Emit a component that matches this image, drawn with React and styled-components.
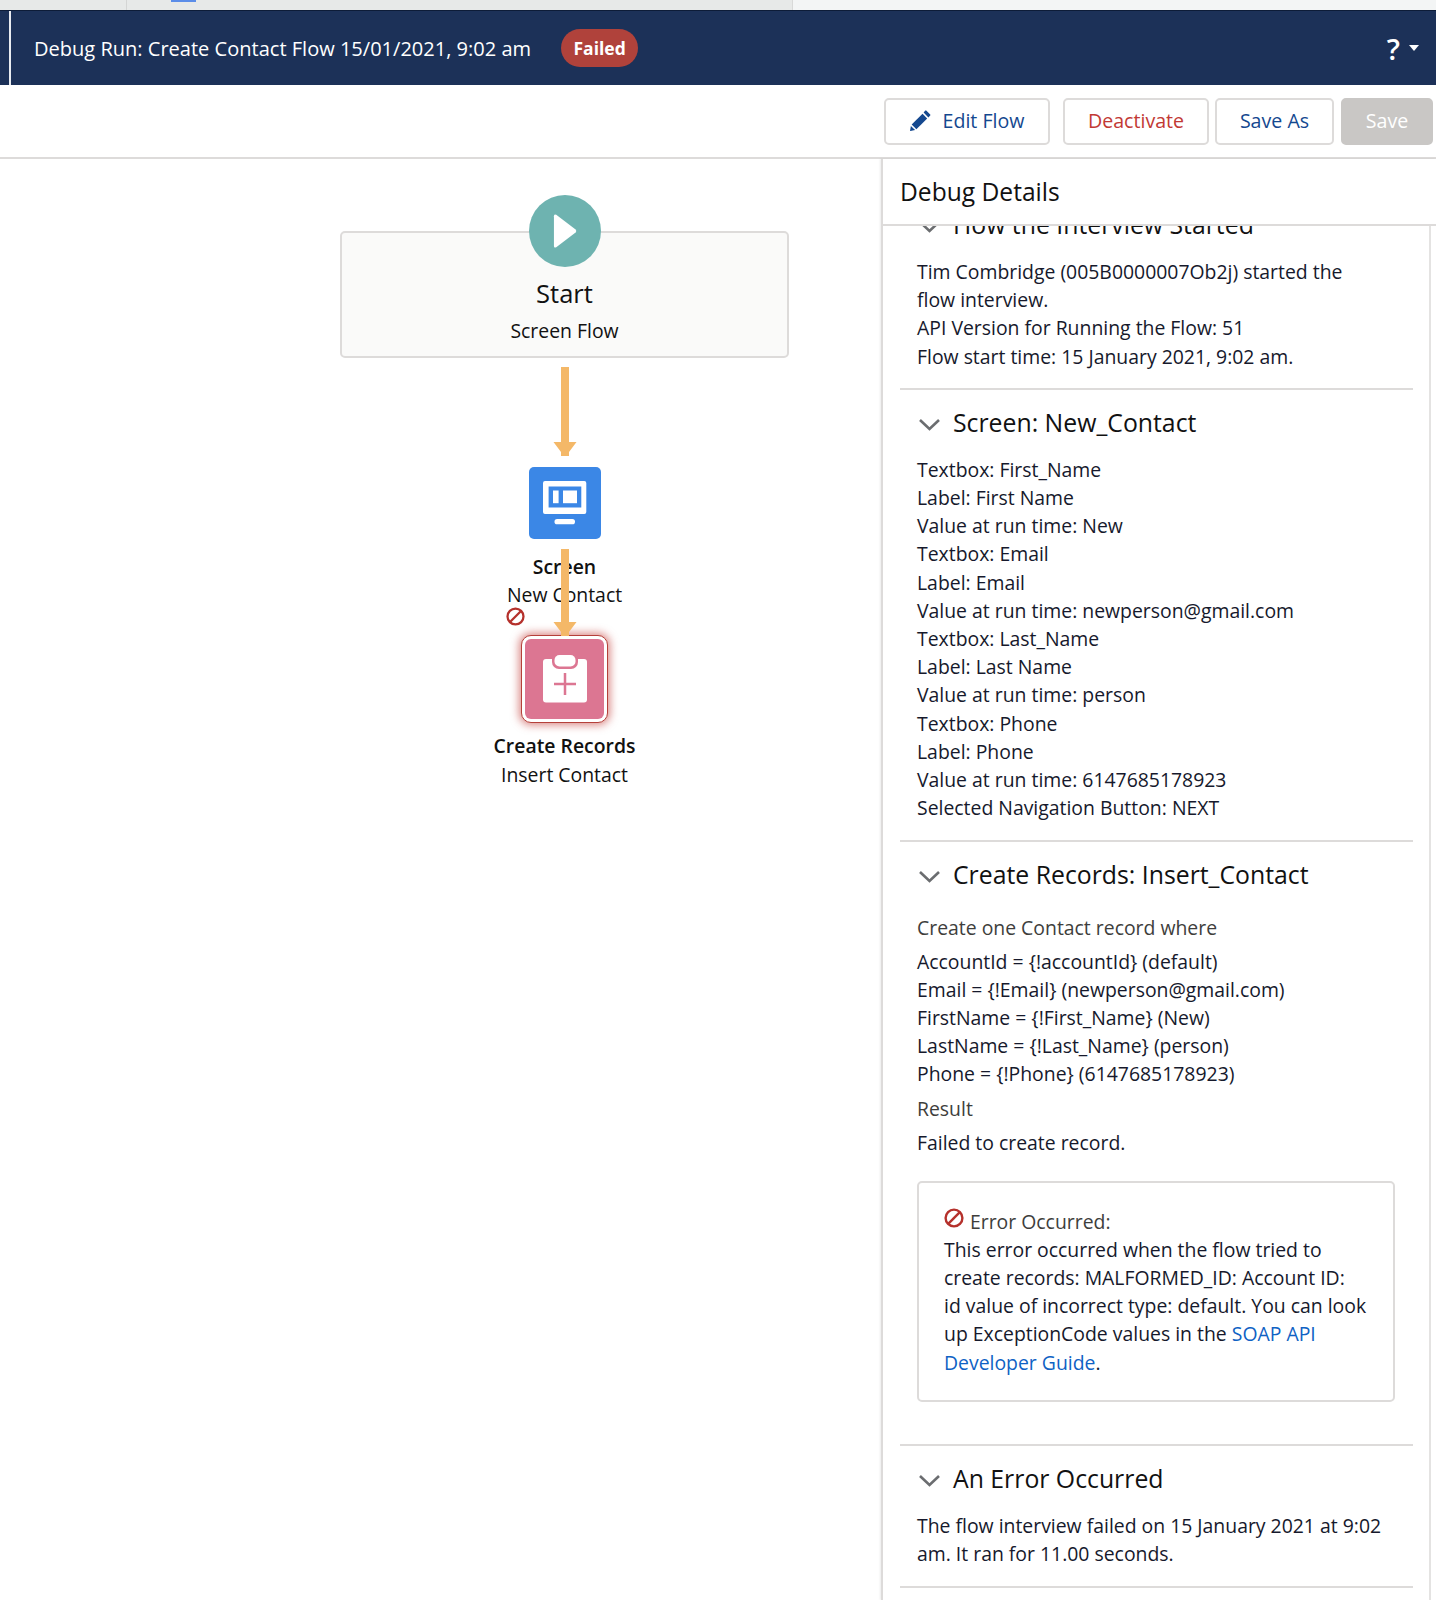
import React from "react";
import styled, { createGlobalStyle } from "styled-components";

const GlobalStyle = createGlobalStyle`
  html, body { margin: 0; padding: 0; background: #fff; }
  body { font-family: "Open Sans", "Noto Sans", sans-serif; color: #16192c; }
  * { box-sizing: border-box; }
`;

const Page = styled.div`
  width: 1436px;
  height: 1600px;
  overflow: hidden;
  display: flex;
  flex-direction: column;
`;

const TabStrip = styled.div`
  height: 11px;
  flex: none;
  display: flex;
  background: #f3f5f5;
  border-bottom: 1px solid #0d1c38;
`;

const TabGroove = styled.div`
  width: 793px;
  position: relative;
  background: #e7e9e8;
  border-right: 1px solid #d8d9d8;
  padding-left: 126px;
`;

const TabDivider = styled.div`
  width: 46px;
  height: 10px;
  border-left: 1px solid #d4d5d4;
  padding-left: 44px;

  &::after {
    content: "";
    display: block;
    width: 25px;
    height: 2px;
    background: #5b8de8;
  }
`;

const Header = styled.header`
  height: 74px;
  flex: none;
  display: flex;
  align-items: center;
  justify-content: space-between;
  padding: 0 17px 0 9px;
  background: #1c3158;
  color: #fff;
`;

const HeaderLeft = styled.div`
  display: flex;
  align-items: center;
  height: 100%;
`;

const Stripe = styled.div`
  width: 2px;
  height: 100%;
  background: #e8ebf0;
  margin-right: 23px;
`;

const RunTitle = styled.h1`
  margin: 0;
  font-size: 20.05px;
  font-weight: 400;
  white-space: nowrap;
`;

const FailedBadge = styled.span`
  margin-left: 30px;
  width: 77px;
  height: 38px;
  display: flex;
  align-items: center;
  justify-content: center;
  border-radius: 19px;
  background: #b0423b;
  font-size: 17.5px;
  font-weight: 700;
`;

const HelpMenu = styled.div`
  display: flex;
  align-items: center;
  gap: 9px;
  font-size: 29px;
  font-weight: 600;
`;

const Caret = styled.span`
  width: 0;
  height: 0;
  border-left: 5px solid transparent;
  border-right: 5px solid transparent;
  border-top: 6px solid #fff;
`;

const Toolbar = styled.div`
  height: 74px;
  flex: none;
  display: flex;
  justify-content: flex-end;
  padding: 13px 3px 0 0;
  border-bottom: 2px solid #dddbda;
`;

const Button = styled.button`
  height: 47px;
  width: ${(p) => p.$width}px;
  margin-left: ${(p) => p.$gap}px;
  padding: 0 0 2px;
  display: flex;
  align-items: center;
  justify-content: center;
  gap: 12px;
  font: inherit;
  font-size: 19.6px;
  border-radius: 5px;
  border: 2px solid ${(p) => (p.$disabled ? "#c9c7c5" : "#dddbda")};
  background: ${(p) => (p.$disabled ? "#c9c7c5" : "#fff")};
  color: ${(p) => (p.$disabled ? "#fff" : p.$danger ? "#c23934" : "#14488f")};
`;

const Main = styled.div`
  flex: 1;
  min-height: 0;
  display: flex;
`;

const Canvas = styled.main`
  width: 881px;
  flex: none;
  padding: 36px 0 0 340px;
`;

const Diagram = styled.div`
  position: relative;
  width: 449px;
  display: flex;
  flex-direction: column;
  align-items: center;
  text-align: center;
`;

const StartCard = styled.div`
  width: 449px;
  height: 127px;
  margin-top: 36px;
  position: relative;
  display: flex;
  flex-direction: column;
  align-items: center;
  padding-top: 44px;
  border: 2px solid #dddbda;
  border-radius: 5px;
  background: #fafaf9;
`;

const StartCircle = styled.div`
  position: absolute;
  top: -38px;
  left: 186.5px;
  width: 72px;
  height: 72px;
  border-radius: 50%;
  background: #6eb3b0;
  display: flex;
  align-items: center;
  justify-content: center;
`;

const StartLabel = styled.div`
  font-size: 25.5px;
  line-height: 32px;
  color: #111;
`;

const StartType = styled.div`
  font-size: 19.4px;
  line-height: 28px;
  margin-top: 8px;
  color: #111;
`;

const Tile = styled.div`
  width: 72px;
  height: 72px;
  margin-top: 109px;
  border-radius: 5px;
  background: #3b87e6;
  display: flex;
  align-items: center;
  justify-content: center;
`;

const ErrorTile = styled.div`
  width: 87px;
  height: 88px;
  margin-top: 9px;
  border-radius: 10px;
  border: 1.5px solid #b5403a;
  box-shadow: 0 0 9px 2px rgba(194, 57, 52, 0.6);
  background: #fff;
  padding: 3px;
`;

const ErrorTileFill = styled.div`
  width: 100%;
  height: 100%;
  border-radius: 6px;
  background: #dc7692;
  display: flex;
  align-items: center;
  justify-content: center;
`;

const NodeName = styled.div`
  font-size: 19.4px;
  line-height: 28.2px;
  font-weight: 600;
  margin-top: ${(p) => p.$top}px;
  color: #111;
`;

const NodeLabel = styled.div`
  font-size: 19.4px;
  line-height: 28.2px;
  color: #111;
`;

const ErrorMark = styled.div`
  align-self: flex-start;
  margin-left: 166px;
  height: 19px;
  margin-top: -2px;
  display: flex;
`;

const Connector = styled.svg`
  position: absolute;
  left: 213px;
  top: ${(p) => p.$top}px;
`;

const Panel = styled.aside`
  flex: 1;
  min-width: 0;
  display: flex;
  flex-direction: column;
  border-left: 2px solid #dddbda;
  box-shadow: -1px 0 2px rgba(0, 0, 0, 0.08);
`;

const PanelHeader = styled.div`
  height: 67px;
  flex: none;
  padding: 0 0 0 17px;
  display: flex;
  align-items: center;
  border-bottom: 2px solid #dddbda;
  font-size: 24.6px;
  color: #111;
`;

const PanelScroll = styled.div`
  flex: 1;
  min-height: 0;
  overflow: hidden;
  padding: 0 16px 0 17px;
  border-right: 2px solid #e4e3e2;
  margin-right: 5px;
`;

const Section = styled.section`
  padding: ${(p) => (p.$clipped ? "0 0 17px" : "15px 0 18px")};
  margin-top: ${(p) => (p.$clipped ? "-19px" : "0")};
  border-bottom: 2px solid #dddbda;
`;

const SectionTitle = styled.h2`
  margin: 0;
  height: 34px;
  display: flex;
  align-items: center;
  gap: 13px;
  padding-left: 19px;
  font-size: 24.8px;
  line-height: 34px;
  font-weight: 400;
  color: #111;
`;

const SectionBody = styled.div`
  margin-top: ${(p) => p.$top || 17}px;
  padding-left: 17px;
  font-size: 19.4px;
  line-height: 28.2px;
  color: #16192c;
`;

const Line = styled.div`
  white-space: nowrap;
`;

const MutedLine = styled(Line)`
  color: #3e3e3c;
  margin: ${(p) => p.$top}px 0 ${(p) => p.$bottom}px;
`;

const ErrorBox = styled.div`
  width: 478px;
  height: 221px;
  margin: 24px 0 24px;
  padding: 24.5px 0 0 25px;
  border: 2px solid #dddbda;
  border-radius: 5px;
`;

const ErrorHeading = styled.div`
  display: flex;
  align-items: center;
  gap: 6px;
  color: #3e3e3c;

  svg {
    transform: translateY(-4px);
  }
`;

const DocLink = styled.a`
  color: #0f62c4;
  text-decoration: none;
`;

function PencilIcon() {
  return (
    <svg width="21" height="21" viewBox="0 0 21 21" fill="#14488f">
      <path d="M16.2 0.6 L20.2 4.6 Q20.7 5.1 20.2 5.6 L18.4 7.4 L13.6 2.6 L15.3 0.6 Q15.8 0.2 16.2 0.6Z" />
      <path d="M12.5 3.8 L17.2 8.5 L6.4 19.3 L1.7 14.6Z" />
      <path d="M0.9 15.9 L5.1 20.1 L0.5 20.9 Q0 21 0.1 20.4Z" />
    </svg>
  );
}

function BanIcon({ size = 19 }) {
  return (
    <svg width={size} height={size} viewBox="0 0 20 20" fill="none" stroke="#b5312c" strokeWidth="2.4">
      <circle cx="10" cy="10" r="8.4" />
      <path d="M4.2 15.8 L15.8 4.2" />
    </svg>
  );
}

function Chevron() {
  return (
    <svg width="21" height="21" viewBox="0 0 21 21" fill="none" stroke="#6b6d70" strokeWidth="2.6" style={{ flex: "none", marginTop: 5 }}>
      <path d="M1 6 L10.5 15 L20 6" />
    </svg>
  );
}

function FlowArrow({ top, height }) {
  return (
    <Connector $top={top} width="24" height={height} viewBox={`0 0 24 ${height}`} fill="#f4b868">
      <rect x="8" y="0" width="8" height={height} />
      <path d={`M0.5 ${height - 14} H23.5 L16 ${height - 4} V${height} H8 V${height - 4}Z`} />
    </Connector>
  );
}

const screenLines = [
  "Textbox: First_Name",
  "Label: First Name",
  "Value at run time: New",
  "Textbox: Email",
  "Label: Email",
  "Value at run time: newperson@gmail.com",
  "Textbox: Last_Name",
  "Label: Last Name",
  "Value at run time: person",
  "Textbox: Phone",
  "Label: Phone",
  "Value at run time: 6147685178923",
  "Selected Navigation Button: NEXT",
];

const recordLines = [
  "AccountId = {!accountId} (default)",
  "Email = {!Email} (newperson@gmail.com)",
  "FirstName = {!First_Name} (New)",
  "LastName = {!Last_Name} (person)",
  "Phone = {!Phone} (6147685178923)",
];

export default function App() {
  return (
    <>
      <GlobalStyle />
      <Page>
        <TabStrip>
          <TabGroove>
            <TabDivider />
          </TabGroove>
        </TabStrip>
        <Header>
          <HeaderLeft>
            <Stripe />
            <RunTitle>Debug Run: Create Contact Flow 15/01/2021, 9:02 am</RunTitle>
            <FailedBadge>Failed</FailedBadge>
          </HeaderLeft>
          <HelpMenu>
            ?
            <Caret />
          </HelpMenu>
        </Header>
        <Toolbar>
          <Button $width={166}>
            <PencilIcon />
            Edit Flow
          </Button>
          <Button $width={146} $gap={13} $danger>Deactivate</Button>
          <Button $width={119} $gap={6}>Save As</Button>
          <Button $width={92} $gap={7} $disabled>Save</Button>
        </Toolbar>
        <Main>
          <Canvas>
            <Diagram>
              <StartCard>
                <StartCircle>
                  <svg width="24" height="36" viewBox="0 0 26 38" fill="#fff">
                    <path d="M1 3 Q1 0 3.5 1.5 L24.5 17.5 Q26 19 24.5 20.5 L3.5 36.5 Q1 38 1 35Z" />
                  </svg>
                </StartCircle>
                <StartLabel>Start</StartLabel>
                <StartType>Screen Flow</StartType>
              </StartCard>
              <FlowArrow top={172} height={89} />
              <Tile>
                <svg width="44" height="46" viewBox="0 0 44 46" fill="#fff">
                  <path
                    fillRule="evenodd"
                    d="M2 1 H41.3 Q43.3 1 43.3 3 V32 Q43.3 34 41.3 34 H2 Q0 34 0 32 V3 Q0 1 2 1Z M5.6 6.5 V27.5 H38.3 V6.5Z"
                  />
                  <rect x="10" y="10.5" width="5.6" height="12.7" />
                  <rect x="20" y="10.5" width="14" height="12.7" />
                  <rect x="11.5" y="39" width="20.5" height="5.3" rx="2.6" />
                </svg>
              </Tile>
              <NodeName $top={14}>Screen</NodeName>
              <NodeLabel>New Contact</NodeLabel>
              <ErrorMark>
                <BanIcon />
              </ErrorMark>
              <FlowArrow top={354} height={87} />
              <ErrorTile>
                <ErrorTileFill>
                  <svg width="44" height="48" viewBox="0 0 44 48" fill="#fff">
                    <rect x="0" y="4" width="44" height="43.5" rx="3" />
                    <rect x="9" y="-3" width="26" height="17" rx="7" fill="#dc7692" />
                    <rect x="11.5" y="0" width="21" height="11.5" rx="5" />
                    <path d="M22 18 V40 M11 29 H33" stroke="#dc7692" strokeWidth="2.5" />
                  </svg>
                </ErrorTileFill>
              </ErrorTile>
              <NodeName $top={9}>Create Records</NodeName>
              <NodeLabel>Insert Contact</NodeLabel>
            </Diagram>
          </Canvas>
          <Panel>
            <PanelHeader>Debug Details</PanelHeader>
            <PanelScroll>
              <Section $clipped>
                <SectionTitle>
                  <Chevron />
                  How the Interview Started
                </SectionTitle>
                <SectionBody $top={17}>
                  <Line>Tim Combridge (005B0000007Ob2j) started the</Line>
                  <Line>flow interview.</Line>
                  <Line>API Version for Running the Flow: 51</Line>
                  <Line>Flow start time: 15 January 2021, 9:02 am.</Line>
                </SectionBody>
              </Section>
              <Section>
                <SectionTitle>
                  <Chevron />
                  Screen: New_Contact
                </SectionTitle>
                <SectionBody>
                  {screenLines.map((text) => (
                    <Line key={text}>{text}</Line>
                  ))}
                </SectionBody>
              </Section>
              <Section>
                <SectionTitle>
                  <Chevron />
                  Create Records: Insert_Contact
                </SectionTitle>
                <SectionBody $top={23}>
                  <MutedLine $top={0} $bottom={5}>Create one Contact record where</MutedLine>
                  {recordLines.map((text) => (
                    <Line key={text}>{text}</Line>
                  ))}
                  <MutedLine $top={6} $bottom={6}>Result</MutedLine>
                  <Line>Failed to create record.</Line>
                  <ErrorBox>
                    <ErrorHeading>
                      <BanIcon size={20} />
                      Error Occurred:
                    </ErrorHeading>
                    <Line>This error occurred when the flow tried to</Line>
                    <Line>create records: MALFORMED_ID: Account ID:</Line>
                    <Line>id value of incorrect type: default. You can look</Line>
                    <Line>
                      up ExceptionCode values in the <DocLink href="#">SOAP API</DocLink>
                    </Line>
                    <Line>
                      <DocLink href="#">Developer Guide</DocLink>.
                    </Line>
                  </ErrorBox>
                </SectionBody>
              </Section>
              <Section>
                <SectionTitle>
                  <Chevron />
                  An Error Occurred
                </SectionTitle>
                <SectionBody>
                  <Line>The flow interview failed on 15 January 2021 at 9:02</Line>
                  <Line>am. It ran for 11.00 seconds.</Line>
                </SectionBody>
              </Section>
            </PanelScroll>
          </Panel>
        </Main>
      </Page>
    </>
  );
}
